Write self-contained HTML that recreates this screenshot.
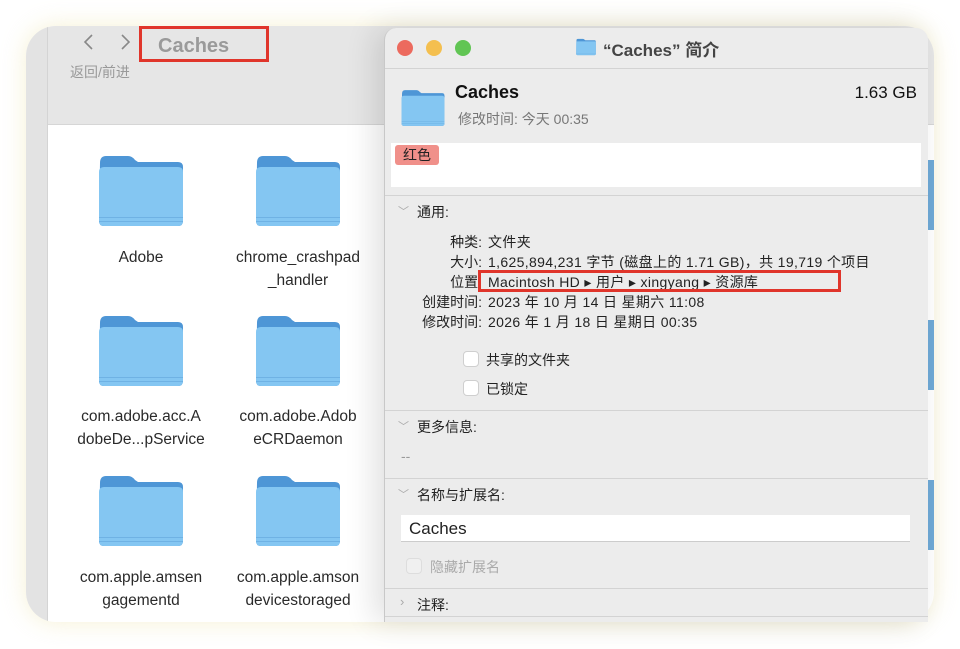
<!DOCTYPE html>
<html><head><meta charset="utf-8"><style>
*{margin:0;padding:0;box-sizing:border-box}
body{width:960px;height:649px;background:#fff;position:relative;overflow:hidden;font-family:"Liberation Sans","Noto Sans CJK SC",sans-serif;color:#222}
.abs{position:absolute}
.finder{left:26px;top:26px;width:908px;height:596px;border-radius:30px;overflow:hidden;background:#fff;box-shadow:0 0 24px rgba(235,225,160,.45)}
.side{left:0;top:0;width:22px;height:596px;background:#e3e3e3;border-right:1px solid #d4d4d4}
.tool{left:22px;top:0;width:886px;height:99px;background:#e6e6e6;border-bottom:1px solid #d6d6d6}
.fold{width:86px;height:72px}
.lbl{width:160px;text-align:center;font-size:15.5px;line-height:23px;color:#2a2a2a}
.info{left:384px;top:28px;width:544px;height:594px;background:#ececec;border-radius:12px 12px 0 0;border-left:1px solid #c8c8c8;box-shadow:-10px 0 30px rgba(0,0,0,.12);overflow:hidden}
.sep{left:0;width:544px;height:1px;background:#d3d3d3}
.t14{font-size:14px;line-height:18px}
.hdr{font-size:14px;color:#222}
.chev{font-size:11px;color:#aaa}
.cb{width:16px;height:16px;background:#fff;border:1px solid #cfcfcf;border-radius:4px}
</style></head><body>
<div class="abs finder">
  <div class="abs side"></div>
  <div class="abs tool"></div>
  <svg class="abs" style="left:55px;top:4px" width="60" height="24"><path d="M11 5 L4 12 L11 19" stroke="#888" stroke-width="1.6" fill="none"/><path d="M41 5 L48 12 L41 19" stroke="#888" stroke-width="1.6" fill="none"/></svg>
  <div class="abs" style="left:132px;top:9px;font-size:20px;font-weight:bold;color:#9a9a9a">Caches</div>
  <div class="abs" style="left:113px;top:0px;width:130px;height:36px;border:3px solid #e0352b"></div>
  <div class="abs" style="left:44px;top:36px;font-size:14px;color:#999">返回/前进</div>
</div>
<svg width="0" height="0" style="position:absolute"><defs><g id="f"><path d="M2 8 Q2 1 8 1 L30 1 Q34 1 37 5 L40 7 L80 7 Q85 7 85 12 L85 66 Q85 71 80 71 L6 71 Q1 71 1 66 Z" fill="#4e96d6"/><path d="M1 17 Q1 12 6 12 L80 12 Q85 12 85 17 L85 66 Q85 71 80 71 L6 71 Q1 71 1 66 Z" fill="#84c6f2"/><rect x="1" y="62" width="84" height="1" fill="#6fb2e4"/><rect x="1" y="66" width="84" height="1" fill="#6fb2e4"/></g></defs></svg>
<svg class="abs fold" style="left:98px;top:155px"><use href="#f"/></svg>
<svg class="abs fold" style="left:255px;top:155px"><use href="#f"/></svg>
<svg class="abs fold" style="left:98px;top:315px"><use href="#f"/></svg>
<svg class="abs fold" style="left:255px;top:315px"><use href="#f"/></svg>
<svg class="abs fold" style="left:98px;top:475px"><use href="#f"/></svg>
<svg class="abs fold" style="left:255px;top:475px"><use href="#f"/></svg>
<div class="abs lbl" style="left:61px;top:246px">Adobe</div>
<div class="abs lbl" style="left:218px;top:246px">chrome_crashpad<br>_handler</div>
<div class="abs lbl" style="left:61px;top:405px">com.adobe.acc.A<br>dobeDe...pService</div>
<div class="abs lbl" style="left:218px;top:405px">com.adobe.Adob<br>eCRDaemon</div>
<div class="abs lbl" style="left:61px;top:566px">com.apple.amsen<br>gagementd</div>
<div class="abs lbl" style="left:218px;top:566px">com.apple.amson<br>devicestoraged</div>
<div class="abs" style="left:928px;top:160px;width:6px;height:70px;background:#6fa9d6"></div>
<div class="abs" style="left:928px;top:320px;width:6px;height:70px;background:#6fa9d6"></div>
<div class="abs" style="left:928px;top:480px;width:6px;height:70px;background:#6fa9d6"></div>

<div class="abs info">
  <div class="abs" style="left:12px;top:12px;width:16px;height:16px;border-radius:50%;background:#ec6a5e"></div>
  <div class="abs" style="left:41px;top:12px;width:16px;height:16px;border-radius:50%;background:#f4bf4f"></div>
  <div class="abs" style="left:70px;top:12px;width:16px;height:16px;border-radius:50%;background:#61c554"></div>
  <svg class="abs" style="left:191px;top:10px" width="20" height="18" viewBox="0 0 86 72"><use href="#f"/></svg>
  <div class="abs" style="left:218px;top:8px;font-size:17px;font-weight:bold;color:#444">“Caches” 简介</div>
  <div class="abs sep" style="top:40px"></div>
  <svg class="abs" style="left:16px;top:60px" width="44" height="40" viewBox="0 0 86 72"><use href="#f"/></svg>
  <div class="abs" style="left:70px;top:54px;font-size:18px;font-weight:bold;color:#111">Caches</div>
  <div class="abs" style="right:11px;top:55px;font-size:17px;color:#111">1.63 GB</div>
  <div class="abs" style="left:73px;top:81px;font-size:14px;color:#777">修改时间: 今天 00:35</div>
  <div class="abs" style="left:6px;top:115px;width:530px;height:44px;background:#fff"></div>
  <div class="abs" style="left:10px;top:117px;width:44px;height:20px;background:#f0908a;border-radius:3px;font-size:14px;line-height:20px;text-align:center;color:#222">红色</div>
  <div class="abs sep" style="top:167px"></div>
  <div class="abs chev" style="left:13px;top:175px">﹀</div>
  <div class="abs hdr" style="left:32px;top:174px">通用:</div>
  <div class="abs t14" style="left:0;top:204px;width:97px;text-align:right;line-height:20px">种类:<br>大小:<br>位置:<br>创建时间:<br>修改时间:</div>
  <div class="abs t14" style="left:103px;top:204px;line-height:20px;white-space:nowrap;letter-spacing:0.35px">文件夹<br>1,625,894,231 字节 (磁盘上的 1.71 GB)，共 19,719 个项目<br>Macintosh HD ▸ 用户 ▸ xingyang ▸ 资源库<br>2023 年 10 月 14 日 星期六 11:08<br>2026 年 1 月 18 日 星期日 00:35</div>
  <div class="abs" style="left:93px;top:242px;width:363px;height:22px;border:3px solid #e0352b"></div>
  <div class="abs cb" style="left:78px;top:323px"></div>
  <div class="abs t14" style="left:101px;top:323px">共享的文件夹</div>
  <div class="abs cb" style="left:78px;top:352px"></div>
  <div class="abs t14" style="left:101px;top:352px">已锁定</div>
  <div class="abs sep" style="top:382px"></div>
  <div class="abs chev" style="left:13px;top:390px">﹀</div>
  <div class="abs hdr" style="left:32px;top:389px">更多信息:</div>
  <div class="abs t14" style="left:16px;top:419px;color:#999">--</div>
  <div class="abs sep" style="top:450px"></div>
  <div class="abs chev" style="left:13px;top:458px">﹀</div>
  <div class="abs hdr" style="left:32px;top:457px">名称与扩展名:</div>
  <div class="abs" style="left:16px;top:487px;width:509px;height:27px;background:#fff;border-bottom:1px solid #ccc;font-size:17px;line-height:27px;padding-left:8px;color:#222">Caches</div>
  <div class="abs cb" style="left:21px;top:530px;background:#f0f0f0;border-color:#ddd"></div>
  <div class="abs t14" style="left:45px;top:530px;color:#aaa">隐藏扩展名</div>
  <div class="abs sep" style="top:560px"></div>
  <div class="abs" style="left:15px;top:566px;font-size:13px;color:#aaa">›</div>
  <div class="abs hdr" style="left:32px;top:567px">注释:</div>
  <div class="abs sep" style="top:588px"></div>
</div>
</body></html>
